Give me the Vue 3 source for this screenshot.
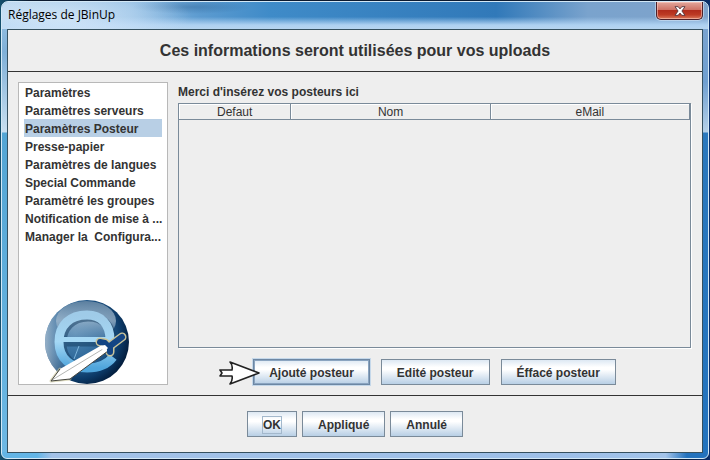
<template>
  <div class="desktop">
    <div class="window">
      <header class="titlebar">
        <span class="caption">Réglages de JBinUp</span>
        <button class="close" type="button" aria-label="Fermer">
          <svg width="12" height="10" viewBox="0 0 12 10">
            <path
              d="M1 .7h3.2L6 2.9 7.8.7H11L7.9 5l3.1 4.3H7.8L6 7.1 4.2 9.3H1L4.1 5z"
              fill="#fff"
              stroke="#54343c"
              stroke-width=".9"
            />
          </svg>
        </button>
      </header>

      <main class="client">
        <h1>Ces informations seront utilisées pour vos uploads</h1>

        <div class="content">
          <nav class="sidebar">
            <ul>
              <li v-for="(item, i) in items" :key="item">
                <button
                  type="button"
                  :class="{ selected: i === current }"
                  @click="current = i"
                >{{ item }}</button>
              </li>
            </ul>
            <svg class="logo" width="88" height="85" viewBox="0 0 88 85">
              <defs>
                <radialGradient id="ball" cx=".36" cy=".4" r=".68">
                  <stop offset="0" stop-color="#4f86b2" />
                  <stop offset=".5" stop-color="#2c6698" />
                  <stop offset=".8" stop-color="#0c3a68" />
                  <stop offset="1" stop-color="#021a38" />
                </radialGradient>
                <linearGradient id="gloss" x1="0" y1="0" x2="0" y2="1">
                  <stop offset="0" stop-color="#5b7f9f" />
                  <stop offset=".5" stop-color="#a9bfd2" stop-opacity=".7" />
                  <stop offset="1" stop-color="#7fa3c2" stop-opacity=".25" />
                </linearGradient>
                <linearGradient id="side" x1="0" y1="0" x2="1" y2="0">
                  <stop offset="0" stop-color="#b4c6d6" stop-opacity=".8" />
                  <stop offset=".3" stop-color="#7fa0bd" stop-opacity="0" />
                </linearGradient>
                <linearGradient id="letter" x1="0" y1="0" x2="0" y2="1">
                  <stop offset="0" stop-color="#9fcbe8" />
                  <stop offset=".5" stop-color="#a5d8f5" />
                  <stop offset="1" stop-color="#4fa5dc" />
                </linearGradient>
              </defs>
              <circle cx="44" cy="43" r="42" fill="url(#ball)" />
              <circle cx="44" cy="43" r="42" fill="url(#side)" />
              <ellipse cx="43" cy="22" rx="30" ry="20" fill="url(#gloss)" />
              <path
                d="M20 43H69C69 26 60 18 45 18C29 18 19 29 19 44C19 60 30 69 45 69C56 69 64 65 69 58"
                fill="none"
                stroke="#12395e"
                stroke-width="9"
                opacity=".5"
              />
              <path
                d="M16 43C16 26 27 16 44 16C58 16 67 25 67 41M16 43C16 60 28 69 44 69C56 69 64 66 70 58"
                fill="none"
                stroke="url(#letter)"
                stroke-width="9"
              />
              <path d="M17 38H70V43H17Z" fill="#a5d8f5" />
              <path d="M22 57l8 9M36 47l-5 13" stroke="#7eb5dc" stroke-width="1" />
              <g fill="none" stroke="#c9c49a" stroke-linecap="round" stroke-linejoin="round">
                <path d="M67 47L79 38" stroke-width="9" />
                <path d="M57 43L62 44L67 49L67 53" stroke-width="9" />
                <path d="M17 70L8 82L27 80" stroke-width="3" opacity=".6" />
              </g>
              <path d="M59 46L65 52L27 80L8 82L17 70Z" fill="#fff" />
              <path d="M60 50L9 81" stroke="#b4b6b4" stroke-width="1" />
              <path d="M17 70L8 82L27 80L65 52" fill="none" stroke="#44443e" stroke-width="1" />
              <g fill="none" stroke="#134584" stroke-linecap="round" stroke-linejoin="round">
                <path d="M67 47L79 38" stroke-width="6" />
                <path d="M57 43L62 44L67 49L67 53" stroke-width="6" />
              </g>
              <path d="M57 47L62 46L65 49L61 53Z" fill="#fff" />
            </svg>
          </nav>

          <section class="panel">
            <h2 id="posters-label">Merci d'insérez vos posteurs ici</h2>
            <div class="grid">
              <table aria-labelledby="posters-label">
                <colgroup>
                  <col class="col-default">
                  <col class="col-name">
                  <col>
                </colgroup>
                <thead>
                  <tr>
                    <th v-for="column in columns" :key="column" scope="col">{{ column }}</th>
                  </tr>
                </thead>
              </table>
            </div>
            <div class="actions">
              <div class="pointed">
                <button class="btn focused" type="button">Ajouté posteur</button>
                <svg class="pointer" width="44" height="26" viewBox="0 0 44 26">
                  <path
                    d="M2 10H14Q15 5 12 2L41 13L12 24Q15 20 14 16H2L4 13Z"
                    fill="#fff"
                    stroke="#222"
                    stroke-width="1.6"
                    stroke-linejoin="round"
                  />
                </svg>
              </div>
              <button class="btn" type="button">Edité posteur</button>
              <button class="btn" type="button">Éffacé posteur</button>
            </div>
          </section>
        </div>

        <footer>
          <button class="btn ok" type="button"><span>OK</span></button>
          <button class="btn" type="button">Appliqué</button>
          <button class="btn" type="button">Annulé</button>
        </footer>
      </main>
    </div>
  </div>
</template>

<script setup>
import { ref } from 'vue'

const items = [
  'Paramètres',
  'Paramètres serveurs',
  'Paramètres Posteur',
  'Presse-papier',
  'Paramètres de langues',
  'Special Commande',
  'Paramètré les groupes',
  'Notification de mise à ...',
  'Manager la \u00a0Configura...'
]

const columns = ['Defaut', 'Nom', 'eMail']

const current = ref(2)
</script>

<style>
body {
  margin: 0;
}
</style>

<style scoped>
* {
  box-sizing: border-box;
}
.desktop {
  display: flex;
  min-height: 100vh;
  background: linear-gradient(90deg, #15506e, #0b1a30 4%, #0b1a30 96%, #0a2f6b);
  font-family: 'Liberation Sans', Arial, sans-serif;
  font-size: 12px;
  color: #333;
}
.window {
  flex: 1;
  display: flex;
  flex-direction: column;
  margin: 1px;
  padding: 0 5px 5px;
  border: 1px solid #d3e8f6;
  border-radius: 7px 7px 6px 6px;
  background:
    linear-gradient(90deg, #63b5e6 0, #63b5e6 35px, #a3c2e8 50px, #9dbfe8 80%, #a3c4ea 94%, #2372bd 97%) bottom / 100% 6px no-repeat,
    linear-gradient(#9fc6e4 0, #7fb0d8 50px, #c8dff0 130px, #53a5d4 131px, #6db8e4) left / 50% 100% no-repeat,
    linear-gradient(#7fa5cf 0, #6f9fd0 80px, #b5d0e8 130px, #2b78bd 131px, #2273be) right / 50% 100% no-repeat;
}
.titlebar {
  display: flex;
  align-items: flex-start;
  justify-content: space-between;
  height: 27px;
  margin: 0 -5px;
  padding: 0 5px 0 6px;
  border-radius: 6px 6px 0 0;
  background:
    radial-gradient(ellipse 130px 30px at 60px 15px, rgba(235, 245, 255, .6), rgba(220, 236, 252, .35) 60%, transparent),
    radial-gradient(ellipse 60px 7px at 190px 5px, rgba(25, 75, 125, .3), transparent),
    linear-gradient(180deg, transparent 55%, #aed1f1 85%, #b7d5f0),
    linear-gradient(90deg, #b5d3ec 0, #8fbce2 18%, #5c9bd0 28%, #3f8bc8 38%, #3179b9 70%, #7aa3cd 83%, #7fa3cb);
}
.caption {
  font-family: 'Open Sans', 'Noto Sans', sans-serif;
  line-height: 26px;
  color: #000;
}
.close {
  display: flex;
  align-items: center;
  justify-content: center;
  width: 47px;
  height: 18px;
  padding: 0;
  border: 1px solid #4d2029;
  border-top: 0;
  border-radius: 0 0 5px 5px;
  background: linear-gradient(#e2a79c, #cf7366 45%, #b12c1c 50%, #bd3a24 75%, #db7a5c);
  box-shadow: inset 0 0 0 1px rgba(255, 210, 200, .55), 0 0 0 1px rgba(225, 238, 250, .5);
}
.client {
  flex: 1;
  display: flex;
  flex-direction: column;
  border: 1px solid #35505f;
  background: #eee;
}
h1 {
  margin: 0;
  padding: 9px 0 8px;
  border-bottom: 1px solid #333;
  font-size: 16px;
  line-height: 24px;
  text-align: center;
}
.content {
  flex: 1;
  display: flex;
  gap: 10px;
  padding: 10px 11px 10px 10px;
  border-bottom: 1px solid #333;
}
.sidebar {
  display: flex;
  flex-direction: column;
  justify-content: space-between;
  width: 150px;
  border: 1px solid #b8b8b8;
  background: #fff;
}
.sidebar ul {
  margin: 0;
  padding: 0 5px;
  list-style: none;
}
.sidebar li button {
  display: block;
  width: 100%;
  height: 18px;
  padding: 1px 1px 0;
  border: 0;
  background: none;
  font: bold 12px/18px 'Liberation Sans', Arial, sans-serif;
  color: #333;
  text-align: left;
  white-space: nowrap;
}
.sidebar li .selected {
  background: #b8cfe5;
}
.logo {
  display: block;
  margin-left: 24px;
}
.panel {
  flex: 1;
  display: flex;
  flex-direction: column;
}
h2 {
  margin: 0;
  font-size: 12px;
  line-height: 20px;
}
.grid {
  flex: 1;
  margin-top: 1px;
  border: 1px solid #7a8a99;
  box-shadow: 1px 1px 0 #fff;
}
table {
  width: 100%;
  table-layout: fixed;
  border-collapse: separate;
  border-spacing: 0;
}
.col-default {
  width: 22%;
}
.col-name {
  width: 39%;
}
th {
  height: 16px;
  padding: 2px 0 0;
  border-right: 1px solid #7a8a99;
  border-bottom: 1px solid #7a8a99;
  box-shadow: inset 1px 1px 0 #fff;
  font-weight: normal;
  line-height: 13px;
}
.actions {
  display: flex;
  justify-content: center;
  gap: 11px;
  margin-top: 11px;
}
.pointed {
  position: relative;
}
.pointer {
  position: absolute;
  top: 1px;
  left: -35px;
}
.btn {
  height: 26px;
  padding: 1px 15px 0;
  border: 1px solid #7a8a99;
  background: linear-gradient(#dde8f3, #fff 30%, #fff 40%, #b8cfe5);
  font: bold 12px/24px 'Liberation Sans', Arial, sans-serif;
  color: #333;
}
.btn.focused {
  border-color: #6d87a3;
  box-shadow: inset 0 0 0 1px #8aa4c0, 0 0 0 1px #c5d8ea;
}
footer {
  display: flex;
  justify-content: center;
  gap: 5px;
  padding: 15px 0;
}
.ok span {
  display: inline-block;
  line-height: 16px;
  outline: 1px solid #a3b8cc;
}
</style>
